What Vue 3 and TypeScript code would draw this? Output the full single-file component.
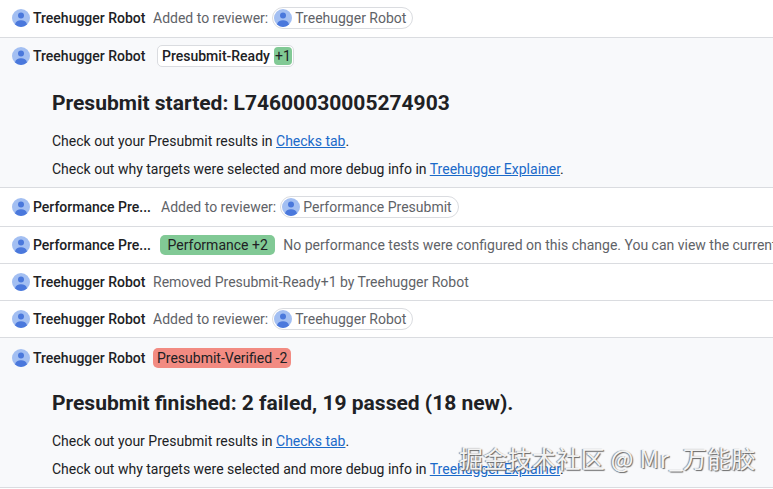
<template>
  <div class="log">
    <div v-for="(msg, i) in messages" :key="i" class="msg" :class="[msg.size, { expanded: msg.title }]">
      <div class="head">
        <svg class="avatar" viewBox="0 0 18 18">
          <circle cx="9" cy="9" r="9" fill="#a3bff2" />
          <circle cx="9" cy="6.5" r="3" fill="#4a78dc" />
          <path d="M3 15.5c.5-3 3-4.300 6-4.300s5.500 1.300 6 4.300A9 9 0 0 1 9 18a9 9 0 0 1-6-2.500z" fill="#4a78dc" />
        </svg>
        <span class="author" :class="{ wide: msg.author.endsWith('...') }">{{ msg.author }}</span>
        <span v-if="msg.reviewer" class="note">Added to reviewer:</span>
        <span v-if="msg.reviewer" class="chip">
          <svg class="avatar" viewBox="0 0 18 18">
            <circle cx="9" cy="9" r="9" fill="#a3bff2" />
            <circle cx="9" cy="6.5" r="3" fill="#4a78dc" />
            <path d="M3 15.5c.5-3 3-4.300 6-4.300s5.500 1.300 6 4.300A9 9 0 0 1 9 18a9 9 0 0 1-6-2.500z" fill="#4a78dc" />
          </svg>
          {{ msg.reviewer }}
        </span>
        <span v-if="msg.vote" class="vote">{{ msg.vote }} <b>+1</b></span>
        <span v-if="msg.label" class="label" :class="msg.labelKind">{{ msg.label }}</span>
        <span v-if="msg.text" class="note">{{ msg.text }}</span>
      </div>
      <div v-if="msg.title" class="body">
        <h2>{{ msg.title }}</h2>
        <p>Check out your Presubmit results in <a href="#">Checks tab</a>.</p>
        <p>Check out why targets were selected and more debug info in <a href="#">Treehugger Explainer</a>.</p>
      </div>
    </div>
    <div class="watermark">掘金技术社区 @ Mr_万能胶</div>
  </div>
</template>

<script setup lang="ts">
interface Message {
  author: string
  size?: string
  reviewer?: string
  vote?: string
  label?: string
  labelKind?: string
  text?: string
  title?: string
}

const messages: Message[] = [
  { author: 'Treehugger Robot', size: 'mid', reviewer: 'Treehugger Robot' },
  { author: 'Treehugger Robot', size: 'mid', vote: 'Presubmit-Ready', title: 'Presubmit started: L74600030005274903' },
  { author: 'Performance Pre...', size: 'tall', reviewer: 'Performance Presubmit' },
  {
    author: 'Performance Pre...',
    label: 'Performance +2',
    labelKind: 'good',
    text: 'No performance tests were configured on this change. You can view the current'
  },
  { author: 'Treehugger Robot', text: 'Removed Presubmit-Ready+1 by Treehugger Robot' },
  { author: 'Treehugger Robot', reviewer: 'Treehugger Robot' },
  {
    author: 'Treehugger Robot',
    size: 'last',
    label: 'Presubmit-Verified -2',
    labelKind: 'bad',
    title: 'Presubmit finished: 2 failed, 19 passed (18 new).'
  }
]
</script>

<style>
html,
body {
  margin: 0;
  background: #fff;
  overflow: hidden;
}
</style>

<style scoped>
.log {
  position: relative;
  width: 773px;
  height: 489px;
  overflow: hidden;
  font-family: Roboto, "Noto Sans CJK SC", sans-serif;
  font-size: 14px;
  line-height: 20px;
  color: #202124;
}

.msg {
  border-bottom: 1px solid #dadce0;
}

.msg.expanded {
  height: 149px;
  background: #f8f9fb;
}

.head {
  display: flex;
  align-items: center;
  height: 36px;
  padding-left: 12px;
  white-space: nowrap;
  overflow: hidden;
}

.mid .head {
  margin-bottom: 1px;
}

.tall .head {
  height: 38px;
}

.last .head {
  height: 40px;
}

.avatar {
  width: 18px;
  height: 18px;
  flex: none;
}

.author {
  flex: none;
  margin-left: 3px;
  width: 117px;
  font-weight: 500;
}

.author.wide {
  width: 125px;
}

.note {
  margin-left: 3px;
  color: #5f6368;
}

.chip {
  display: inline-flex;
  align-items: center;
  gap: 3px;
  height: 20px;
  margin-left: 4px;
  padding: 0 6px 0 1px;
  border: 1px solid #dadce0;
  border-radius: 11px;
  background: #fff;
  color: #5f6368;
}

.vote {
  display: inline-flex;
  align-items: center;
  gap: 4px;
  height: 20px;
  margin-left: 7px;
  padding: 0 1px 0 4px;
  border: 1px solid #dadce0;
  border-radius: 5px;
  background: #fff;
  font-weight: 500;
}

.vote b {
  width: 18px;
  height: 18px;
  line-height: 18px;
  text-align: center;
  border-radius: 4px;
  background: #81c995;
  font-weight: 400;
}

.label {
  flex: none;
  height: 20px;
  margin-left: 3px;
  padding: 0 4px;
  border-radius: 5px;
}

.label.good {
  margin-left: 2px;
  padding: 0 7.5px;
  margin-right: 5px;
  background: #81c995;
}

.label.bad {
  background: #f28b82;
}

.body {
  padding: 13px 0 0 52px;
}

.last .body {
  padding-top: 10px;
}

h2 {
  margin: 0 0 13px;
  font-size: 21px;
  line-height: 30px;
  font-weight: 700;
}

p {
  margin: 0 0 8px;
  line-height: 20px;
}

a {
  color: #1b6ac9;
}

.watermark {
  position: absolute;
  left: 459px;
  top: 443px;
  font-family: "Noto Sans CJK SC", sans-serif;
  font-size: 24px;
  line-height: 30px;
  letter-spacing: 0.35px;
  color: rgba(255, 255, 255, 0.92);
  white-space: nowrap;
  text-shadow: 1px 1px 1px #666, -1px 0 1px #888;
}
</style>
